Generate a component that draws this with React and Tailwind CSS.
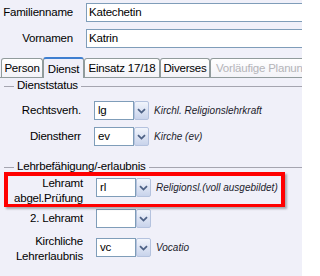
import React from 'react'

const tabs = [
  { label: 'Person', w: 'w-[42px]' },
  { label: 'Dienst', w: 'w-[41px]', active: true },
  { label: 'Einsatz 17/18', w: 'w-[76px]' },
  { label: 'Diverses', w: 'w-[50px]' },
  { label: 'Vorläufige Planung', w: 'w-[110px]', disabled: true },
]

const Combo = ({ value }) => (
  <div className="flex h-[19px] shrink-0">
    <div className="w-[40px] h-full border border-[#7f9db9] bg-white pl-[3px] leading-[17px] text-black">
      {value}
    </div>
    <div className="w-[15px] h-full border border-[#b4c2de] rounded-[2px] bg-gradient-to-b from-[#f2f5fc] to-[#c8d3eb] flex items-center justify-center">
      <svg width="9" height="6" viewBox="0 0 9 6">
        <path d="M1 1.2 L4.5 4.6 L8 1.2" stroke="#4d6185" strokeWidth="1.8" fill="none" />
      </svg>
    </div>
  </div>
)

const Desc = ({ children }) => (
  <span className="ml-[5px] italic text-[10px] tracking-normal text-[#1c1c2c] whitespace-nowrap">{children}</span>
)

const GroupHeader = ({ title, className }) => (
  <div className={`flex items-center pl-[4px] ${className}`}>
    <div className="w-[10px] h-px bg-[#a5a5b0]" />
    <span className="px-[3px] whitespace-nowrap">{title}</span>
    <div className="flex-1 h-px bg-[#a5a5b0]" />
  </div>
)

export default function App() {
  return (
    <div className="relative w-[302px] h-[276px] overflow-hidden bg-[#f0f0f9] pt-[3px] font-['Liberation_Sans',Arial,sans-serif] text-[11.5px] tracking-[-0.2px] text-black">
      {/* Name fields */}
      <div className="flex items-center h-[19px]">
        <span className="w-[73px] shrink-0 text-right">Familienname</span>
        <div className="ml-[13px] w-[260px] h-full shrink-0 border border-[#7f9db9] bg-white pl-[2px] leading-[17px]">
          Katechetin
        </div>
      </div>
      <div className="flex items-center h-[19px] mt-[7px]">
        <span className="w-[73px] shrink-0 text-right">Vornamen</span>
        <div className="ml-[13px] w-[260px] h-full shrink-0 border border-[#7f9db9] bg-white pl-[2px] leading-[17px]">
          Katrin
        </div>
      </div>

      {/* Tabs */}
      <div className="mt-[9px] flex items-end h-[21px] border-b border-[#919b9c] pl-[1px]">
        {tabs.map((t) =>
          t.active ? (
            <div
              key={t.label}
              className={`${t.w} shrink-0 h-[21px] -mb-px relative z-10 bg-[#f0f0f9] border-x border-[#919b9c] border-t-2 border-t-[#3f7fd0] rounded-t-[3px] flex items-start justify-center pt-[2px]`}
            >
              {t.label}
            </div>
          ) : (
            <div
              key={t.label}
              className={`${t.w} shrink-0 h-[19px] border border-b-0 border-[#919b9c] rounded-t-[3px] bg-gradient-to-b from-white to-[#f3f3f8] flex items-center pt-[2px] whitespace-nowrap ${t.disabled ? 'text-[#b4b4b8] justify-start pl-[5px]' : 'justify-center'}`}
            >
              {t.label}
            </div>
          )
        )}
      </div>

      {/* Dienststatus */}
      <GroupHeader title="Dienststatus" className="h-[14px] mt-px" />
      <div className="flex items-center mt-[8px]">
        <span className="w-[81px] shrink-0 text-right">Rechtsverh.</span>
        <div className="ml-[13px] flex items-center">
          <Combo value="lg" />
          <Desc>Kirchl. Religionslehrkraft</Desc>
        </div>
      </div>
      <div className="flex items-center mt-[7px]">
        <span className="w-[81px] shrink-0 text-right">Dienstherr</span>
        <div className="ml-[13px] flex items-center">
          <Combo value="ev" />
          <Desc>Kirche (ev)</Desc>
        </div>
      </div>

      {/* Lehrbefähigung */}
      <GroupHeader title="Lehrbefähigung/-erlaubnis" className="h-[12px] mt-[15px]" />
      <div className="flex items-start mt-[3px] leading-[15px]">
        <span className="w-[83px] shrink-0 text-right">
          Lehramt
          <br />
          abgel.Prüfung
        </span>
        <div className="ml-[13px] mt-[2px] flex items-center">
          <Combo value="rl" />
          <Desc>Religionsl.(voll ausgebildet)</Desc>
        </div>
      </div>
      <div className="flex items-center mt-[3px]">
        <span className="w-[83px] shrink-0 text-right">2. Lehramt</span>
        <div className="ml-[13px] flex items-center">
          <Combo value="" />
        </div>
      </div>
      <div className="flex items-start mt-[6px] leading-[15px]">
        <span className="w-[83px] shrink-0 text-right">
          Kirchliche
          <br />
          Lehrerlaubnis
        </span>
        <div className="ml-[13px] mt-[4px] flex items-center">
          <Combo value="vc" />
          <Desc>Vocatio</Desc>
        </div>
      </div>

      {/* Highlight annotation */}
      <div className="absolute left-[4px] top-[172px] w-[281px] h-[35px] border-4 border-b-[3px] border-[#ff0000] shadow-[2px_2px_2px_rgba(0,0,0,0.3)] pointer-events-none" />
    </div>
  )
}
